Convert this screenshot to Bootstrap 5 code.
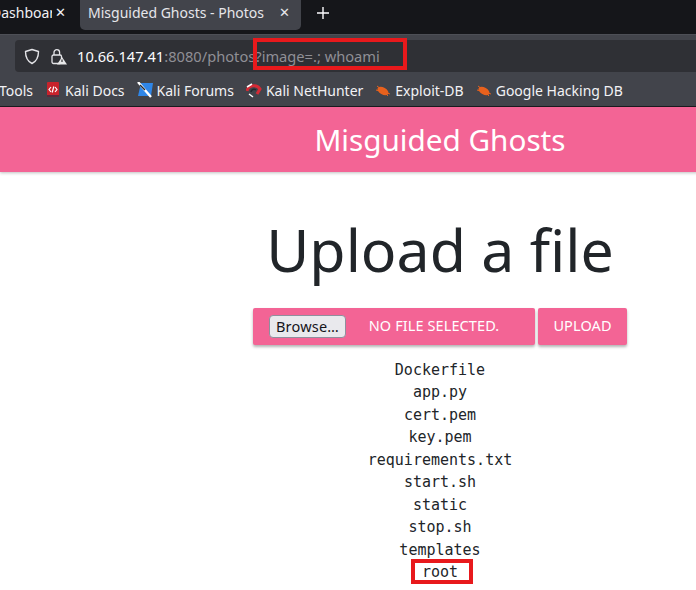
<!DOCTYPE html>
<html lang="en">
<head>
<meta charset="utf-8">
<title>Misguided Ghosts - Photos</title>
<link rel="stylesheet" href="https://cdn.jsdelivr.net/npm/bootstrap@5.3.0/dist/css/bootstrap.min.css">
<style>
html,body{margin:0;height:590px;overflow:hidden;background:#fff}
body{font-family:"Noto Sans",sans-serif;position:relative}
.chrome-wrap{width:696px;overflow:hidden}
.tabbar{height:34px;background:#15161a;color:#fbfbfe;font-size:14px}
.tab-old{width:80px;overflow:hidden;height:30px;line-height:26px;white-space:nowrap;color:#f0f0f4}
.tab-old span{margin-left:-9px;width:61px;overflow:hidden;display:block;flex:none}
.tab-on{width:221px;height:30px;background:#42444b;border-radius:0 0 5px 5px;line-height:26px;padding:0 9px 0 8px;color:#e6e6ea}
.tab-x{font-size:13px;line-height:24px;width:16px;text-align:center}
.plus-ic{margin-left:15px;margin-top:6px}
.urlbar{height:40px;background:#42444b;padding:5px 0 0 15px;border-top:1px solid #4d4f56}
.urlfield{height:32px;background:#2f3035;border-radius:4px 0 0 4px;font-size:14.66px;line-height:31px;white-space:nowrap;padding-left:9px;color:#fbfbfe}
.urlfield em{font-style:normal;color:#8f8f96}
.url-ic{flex:none}
.lock-ic{margin-left:11px}
.url-text{margin-left:10px}
.bookbar{height:33px;background:#42444b;color:#f2f2f5;font-size:14px;line-height:33px;white-space:nowrap;border-bottom:1px solid #1b1c20}
.book-item{gap:4px;margin-left:12px}
.book-tools{margin-left:-1px}
.page-wide{width:880px;text-align:center}
.pink-head{height:65px;background:#f36495;color:#fff;font-size:29.700px;line-height:66px;box-shadow:0 1px 3px rgba(0,0,0,.25)}
.big-title{font-size:59px;font-weight:400;line-height:86px;margin:0;padding-top:34px;color:#212529}
.up-row{gap:3px;margin-top:16px;height:37px}
.pick-box,.up-btn{background:#f36495;color:#fff;border-radius:2px;box-shadow:0 2px 3px rgba(0,0,0,.3);font-size:14.500px;letter-spacing:.1px;line-height:35px;border:0;padding:0 0 2px}
.pick-box{width:282px;padding-left:16px;padding-bottom:0}
.pick-name{width:176px;text-align:center;padding-bottom:2px}
.up-btn{width:89px}
.fake-browse{width:77px;height:23px;background:#e9e9ed;border:1px solid #8f8f9d;border-radius:4px;color:#15141a;font-size:14.500px;line-height:18px;padding:0 0 2px;letter-spacing:.2px}
.file-list{font-family:"DejaVu Sans Mono",monospace;font-size:15px;line-height:22.500px;color:#212529;margin:13.500px 0 0;padding:0;list-style:none}
.mark-red{position:absolute;border:4px solid #e8191c;background:transparent}
.mark-url{left:253px;top:38px;width:154px;height:32px}
.mark-root{left:411px;top:559px;width:62px;height:25px}
</style>
</head>
<body>
<div class="chrome-wrap">
  <div class="tabbar d-flex">
    <div class="tab-old d-flex"><span>Dashboar</span><div class="tab-x">✕</div></div>
    <div class="tab-on d-flex justify-content-between"><div>Misguided Ghosts - Photos</div><div class="tab-x">✕</div></div>
    <svg class="plus-ic" width="14" height="14" viewBox="0 0 14 14"><path d="M7 1v12M1 7h12" stroke="#fbfbfe" stroke-width="1.400"/></svg>
  </div>
  <div class="urlbar">
    <div class="urlfield d-flex align-items-center">
      <svg class="url-ic" width="16" height="17" viewBox="0 0 16 17"><path d="M8 1.500 14.500 3.500c0 6-1.500 9.500-6.500 12C3 13 1.500 9.500 1.500 3.500Z" fill="none" stroke="#e4e4e8" stroke-width="1.400" stroke-linejoin="round"/></svg>
      <svg class="url-ic lock-ic" width="16" height="17" viewBox="0 0 16 17"><rect x="1" y="7" width="9.500" height="8.500" rx="1.500" fill="none" stroke="#e4e4e8" stroke-width="1.300"/><path d="M3 7V4.500a2.800 2.800 0 0 1 5.600 0V7" fill="none" stroke="#e4e4e8" stroke-width="1.300"/><path d="M11 9 16 16.500H6Z" fill="#e8e8ea"/><path d="M11 11.500v2.500" stroke="#333" stroke-width="1.200"/></svg>
      <div class="url-text">10.66.147.41<em>:8080/photos?image=.; whoami</em></div>
    </div>
  </div>
  <div class="bookbar d-flex">
    <div class="book-item d-flex align-items-center book-tools">Tools</div>
    <div class="book-item d-flex align-items-center">
      <svg width="16" height="16" viewBox="0 0 16 16"><rect x="2" y="0" width="12" height="15" rx="1" fill="#c8232c"/><rect x="2" y="13" width="12" height="2" fill="#5b2a3c"/><path d="M6 5 4 7.500 6 10M10 5l2 2.500L10 10M8.800 4.500l-1.600 6" stroke="#fff" stroke-width="1.200" fill="none"/></svg>
      <span>Kali Docs</span>
    </div>
    <div class="book-item d-flex align-items-center">
      <svg width="16" height="16" viewBox="0 0 16 16"><path d="M4 1h12l-2 13H1Z" fill="#2f86e8"/><path d="M1 0l6 7 7 8" stroke="#fff" stroke-width="2.400" fill="none"/><path d="M3 3l5 5" stroke="#23272e" stroke-width="1.400"/></svg>
      <span>Kali Forums</span>
    </div>
    <div class="book-item d-flex align-items-center">
      <svg width="16" height="16" viewBox="0 0 16 16"><path d="M1 9a7 6.500 0 0 1 13-2l-3 5" fill="none" stroke="#d42a35" stroke-width="3"/><path d="M1 5l5-3M3 12l4 3" stroke="#fff" stroke-width="1.500"/><path d="M5 10a3 3 0 0 1 5-2" fill="none" stroke="#23272e" stroke-width="1.500"/></svg>
      <span>Kali NetHunter</span>
    </div>
    <div class="book-item d-flex align-items-center">
      <svg width="16" height="14" viewBox="0 0 16 14"><ellipse cx="8" cy="8" rx="6" ry="3.500" transform="rotate(30 8 8)" fill="#e8611d"/><path d="M2 3l4 3M1 7l4 1M13 13l-3-3M15 11l-3-1" stroke="#e8611d" stroke-width="1"/></svg>
      <span>Exploit-DB</span>
    </div>
    <div class="book-item d-flex align-items-center">
      <svg width="16" height="14" viewBox="0 0 16 14"><ellipse cx="8" cy="8" rx="6" ry="3.500" transform="rotate(30 8 8)" fill="#e8611d"/><path d="M2 3l4 3M1 7l4 1M13 13l-3-3M15 11l-3-1" stroke="#e8611d" stroke-width="1"/></svg>
      <span>Google Hacking DB</span>
    </div>
  </div>
</div>
<div class="page-wide">
  <div class="pink-head">Misguided Ghosts</div>
  <h1 class="big-title">Upload a file</h1>
  <div class="up-row d-flex justify-content-center">
    <div class="pick-box d-flex align-items-center">
      <button class="fake-browse" type="button">Browse…</button>
      <div class="pick-name">NO FILE SELECTED.</div>
    </div>
    <button class="up-btn" type="button">UPLOAD</button>
  </div>
  <ul class="file-list">
    <li>Dockerfile</li><li>app.py</li><li>cert.pem</li><li>key.pem</li><li>requirements.txt</li><li>start.sh</li><li>static</li><li>stop.sh</li><li>templates</li><li>root</li>
  </ul>
</div>
<div class="mark-red mark-url"></div>
<div class="mark-red mark-root"></div>
</body>
</html>
